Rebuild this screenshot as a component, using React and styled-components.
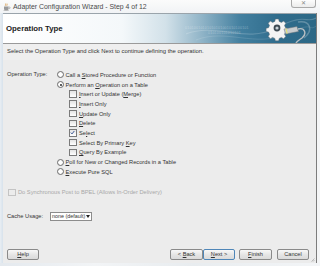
import React from "react";
import styled, { createGlobalStyle } from "styled-components";

const GlobalStyle = createGlobalStyle`
  html, body {
    margin: 0;
    padding: 0;
    background: #eef2f5;
  }
  body {
    font-family: "Liberation Sans", Arial, sans-serif;
    color: #2a2a2a;
  }
`;

const Window = styled.div`
  width: 320px;
  height: 266px;
  display: flex;
  flex-direction: column;
  overflow: hidden;
  background: #eef2f5;
`;

const TitleBar = styled.div`
  height: 13px;
  display: flex;
  align-items: center;
  padding-left: 2px;
  background: linear-gradient(#fbfbfb, #f1f3f5);
  position: relative;
`;

const TitleText = styled.span`
  font-size: 6.9px;
  color: #4a4a4a;
  margin-left: 2px;
  white-space: nowrap;
`;

const CloseButton = styled.div`
  position: absolute;
  right: 4px;
  top: -1px;
  width: 23px;
  height: 8px;
  border: 1px solid #a9a9a9;
  border-top: none;
  border-radius: 0 0 3px 3px;
  background: linear-gradient(#ffffff, #ececec);
  color: #8a8a8a;
  font-size: 6px;
  line-height: 8px;
  text-align: center;
`;

const Frame = styled.div`
  flex: 1;
  display: flex;
`;

const SideBorder = styled.div`
  width: ${(p) => p.$w}px;
  background: ${(p) => p.$bg};
`;

const Dialog = styled.div`
  width: 313px;
  display: flex;
  flex-direction: column;
  background: #ececec;
  border-right: 1px solid #7c7c7c;
  position: relative;
`;

const Header = styled.div`
  height: 29px;
  border-top: 1px solid #9aa4ab;
  border-bottom: 1px solid #9a9a9a;
  display: flex;
  align-items: center;
  padding-left: 3px;
  position: relative;
  overflow: hidden;
  background: linear-gradient(
    90deg,
    #ffffff 0%,
    #f4f8fa 38%,
    #d2e1e9 52%,
    #8db2c6 64%,
    #427f9f 76%,
    #2f6c8c 88%,
    #2c6886 100%
  );
`;

const HeaderTitle = styled.span`
  font-size: 7.8px;
  font-weight: bold;
  color: #1c1c1c;
`;

const Binary = styled.div`
  position: absolute;
  left: ${(p) => p.$x}px;
  top: ${(p) => p.$y}px;
  font-size: 3.6px;
  letter-spacing: 0.2px;
  color: rgba(255, 255, 255, 0.35);
  white-space: nowrap;
`;

const HeaderArt = styled.svg`
  position: absolute;
  right: 0;
  top: 0;
`;

const Description = styled.div`
  height: 16px;
  padding: 3px 0 0 4px;
  box-sizing: border-box;
  font-size: 5.9px;
  line-height: 8px;
  color: #333;
  background: #efefef;
  white-space: nowrap;
`;

const Body = styled.div`
  flex: 1;
  display: flex;
  flex-direction: column;
  padding: 10px 0 0 4px;
  font-size: 5.7px;
  color: #333;
`;

const OperationGrid = styled.div`
  display: grid;
  grid-template-columns: 50px 1fr;
`;

const Label = styled.div`
  height: 9.7px;
  line-height: 9.7px;
  white-space: nowrap;
`;

const Options = styled.div`
  display: flex;
  flex-direction: column;
`;

const Option = styled.div`
  height: 9.7px;
  display: flex;
  align-items: center;
  padding-left: ${(p) => (p.$sub ? 12 : 0)}px;
  white-space: nowrap;
  color: ${(p) => (p.$disabled ? "#a8a8a8" : "#333")};
`;

const OptionText = styled.span`
  white-space: pre;
`;

const Radio = styled.span`
  flex: none;
  width: 5px;
  height: 5px;
  border-radius: 50%;
  border: 0.8px solid #6e6e6e;
  background: radial-gradient(#ffffff 40%, #e2e2e2);
  margin-right: 1.5px;
  display: flex;
  align-items: center;
  justify-content: center;
  &::after {
    content: "";
    width: 2px;
    height: 2px;
    border-radius: 50%;
    background: ${(p) => (p.$on ? "#2a2a2a" : "transparent")};
  }
`;

const Check = styled.span`
  flex: none;
  width: 5.5px;
  height: 5.5px;
  border: 0.8px solid ${(p) => (p.$disabled ? "#c4c4c4" : "#7a7a7a")};
  background: ${(p) => (p.$disabled ? "#ececec" : "linear-gradient(#e4e4e4, #ffffff)")};
  margin-right: 2.5px;
  display: flex;
  align-items: center;
  justify-content: center;
`;

const Under = styled.span`
  text-decoration: underline;
  text-decoration-thickness: 0.5px;
  text-underline-offset: 1px;
`;

const SyncRow = styled(Option)`
  margin-top: 11px;
  padding-left: 1px;
`;

const CacheRow = styled.div`
  margin-top: 14px;
  height: 10px;
  display: flex;
  align-items: center;
`;

const CacheLabel = styled.span`
  width: 43px;
  white-space: nowrap;
`;

const Select = styled.div`
  width: 42px;
  height: 9px;
  border: 1px solid #8c8c8c;
  background: #ffffff;
  display: flex;
  align-items: center;
  justify-content: space-between;
  padding: 0 1.5px 0 1px;
  box-sizing: border-box;
  font-size: 5.4px;
  white-space: nowrap;
`;

const Arrow = styled.span`
  width: 0;
  height: 0;
  border-left: 2.2px solid transparent;
  border-right: 2.2px solid transparent;
  border-top: 3px solid #222;
`;

const ButtonBar = styled.div`
  margin-top: auto;
  margin-bottom: 3px;
  display: flex;
  align-items: center;
  padding-right: 5px;
`;

const Button = styled.div`
  width: ${(p) => p.$w || 33}px;
  height: 11px;
  box-sizing: border-box;
  border: 1px solid ${(p) => (p.$default ? "#4f86b8" : "#8a8a8a")};
  border-radius: 2px;
  background: linear-gradient(#f8f8f8, #e6e6e6 50%, #dadada);
  font-size: 5.6px;
  line-height: 9px;
  text-align: center;
  color: #333;
  margin-left: ${(p) => p.$gap || 0}px;
  white-space: pre;
`;

const Grip = styled.svg`
  position: absolute;
  right: 1px;
  bottom: 1px;
`;

const BottomStrip = styled.div`
  height: 3px;
  background: linear-gradient(90deg, #e4e9ee, #f2f4f6 30%, #e8ecef 60%, #f3f5f7);
`;

const JavaIcon = () => (
  <svg width="9" height="9" viewBox="0 0 9 9">
    <path d="M2 4.5h4.5v2.2a1.6 1.6 0 0 1-1.6 1.6H3.6A1.6 1.6 0 0 1 2 6.7z" fill="#9a9a9a" />
    <path d="M6.5 5h0.8a0.8 0.8 0 0 1 0 1.6h-0.8" fill="none" stroke="#8a8a8a" strokeWidth="0.6" />
    <path d="M3.5 3.8c-0.6-0.8 0.6-1.2 0-2.2M5 3.8c-0.6-0.8 0.6-1.2 0-2.2" fill="none" stroke="#d08a2c" strokeWidth="0.7" />
    <ellipse cx="4.2" cy="8.4" rx="3" ry="0.5" fill="#b7b7b7" />
  </svg>
);

const GearArt = () => (
  <HeaderArt width="130" height="29" viewBox="0 0 130 29">
    <path d="M0 20 C30 8 60 30 90 14 S120 10 130 4" fill="none" stroke="rgba(255,255,255,0.18)" strokeWidth="1.2" />
    <path d="M10 26 C40 14 70 34 100 20 S122 18 130 12" fill="none" stroke="rgba(255,255,255,0.12)" strokeWidth="1" />
    <path d="M112 8 C124 6 128 16 118 24" fill="none" stroke="rgba(255,255,255,0.25)" strokeWidth="1.5" />
    <g transform="translate(91 14)">
      <g fill="#f4f4f4" stroke="#5a6a74" strokeWidth="0.5">
        <path d="M-1.6 -9h3.2l0.6 2.4 2.2 1 2.2-1.3 2.2 2.2-1.3 2.2 1 2.2 2.4 0.6v3.2l-2.4 0.6-1 2.2 1.3 2.2-2.2 2.2-2.2-1.3-2.2 1-0.6 2.4h-3.2l-0.6-2.4-2.2-1-2.2 1.3-2.2-2.2 1.3-2.2-1-2.2-2.4-0.6v-3.2l2.4-0.6 1-2.2-1.3-2.2 2.2-2.2 2.2 1.3 2.2-1z" />
      </g>
      <circle r="3.4" fill="#3e4a52" />
      <circle r="1.6" fill="#c9d2d8" />
    </g>
    <path d="M98 15 L111 12.5 L112.5 17.5 L99.5 20 Z" fill="#c8ccce" stroke="#6b7378" strokeWidth="0.5" />
    <path d="M100 14.6 L101.2 19.6" stroke="#e8ea60" strokeWidth="0.9" />
    <path d="M112 15 C119 13 121 20 116 24 C113 26 111 27 110 29" fill="none" stroke="#b9bfc3" strokeWidth="1.4" />
  </HeaderArt>
);

const Text = ({ children }) => <OptionText>{children}</OptionText>;

export default function App() {
  return (
    <>
      <GlobalStyle />
      <Window>
        <TitleBar>
          <JavaIcon />
          <TitleText>Adapter Configuration Wizard - Step 4 of 12</TitleText>
          <CloseButton>✕</CloseButton>
        </TitleBar>
        <Frame>
          <SideBorder $w={3} $bg="linear-gradient(90deg, #e9eef3, #d7e2ec)" />
          <Dialog>
            <Header>
              <HeaderTitle>Operation Type</HeaderTitle>
              <Binary $x={182} $y={12}>01010010101010101001010100101</Binary>
              <Binary $x={205} $y={17}>010100101010101</Binary>
              <GearArt />
            </Header>
            <Description>
              Select the Operation Type and click Next to continue defining the operation.
            </Description>
            <Body>
              <OperationGrid>
                <Label>Operation Type:</Label>
                <Options>
                  <Option>
                    <Radio />
                    <Text>Call a <Under>S</Under>tored Procedure or Function</Text>
                  </Option>
                  <Option>
                    <Radio $on />
                    <Text>Perform an <Under>O</Under>peration on a Table</Text>
                  </Option>
                  <Option $sub>
                    <Check />
                    <Text><Under>I</Under>nsert or Update (<Under>M</Under>erge)</Text>
                  </Option>
                  <Option $sub>
                    <Check />
                    <Text><Under>I</Under>nsert Only</Text>
                  </Option>
                  <Option $sub>
                    <Check />
                    <Text><Under>U</Under>pdate Only</Text>
                  </Option>
                  <Option $sub>
                    <Check />
                    <Text><Under>D</Under>elete</Text>
                  </Option>
                  <Option $sub>
                    <Check>
                      <svg width="5" height="5" viewBox="0 0 5 5">
                        <path d="M0.8 2.6 L2 3.9 L4.3 1" fill="none" stroke="#2b4a8c" strokeWidth="0.9" />
                      </svg>
                    </Check>
                    <Text>Se<Under>l</Under>ect</Text>
                  </Option>
                  <Option $sub>
                    <Check />
                    <Text>Select By Primary <Under>K</Under>ey</Text>
                  </Option>
                  <Option $sub>
                    <Check />
                    <Text><Under>Q</Under>uery By Example</Text>
                  </Option>
                  <Option>
                    <Radio />
                    <Text><Under>P</Under>oll for New or Changed Records in a Table</Text>
                  </Option>
                  <Option>
                    <Radio />
                    <Text><Under>E</Under>xecute Pure SQL</Text>
                  </Option>
                </Options>
              </OperationGrid>
              <SyncRow $disabled>
                <Check $disabled />
                <Text>Do Synchronous Post to BPEL (Allows In-Order Delivery)</Text>
              </SyncRow>
              <CacheRow>
                <CacheLabel>Cache Usage:</CacheLabel>
                <Select>
                  <span>none (default)</span>
                  <Arrow />
                </Select>
              </CacheRow>
              <ButtonBar>
                <Button $w={32}>
                  <Under>H</Under>elp
                </Button>
                <Button $gap={131}>
                  &lt; <Under>B</Under>ack
                </Button>
                <Button $default $w={32}>
                  <Under>N</Under>ext &gt;
                </Button>
                <Button $gap={4}>
                  <Under>F</Under>inish
                </Button>
                <Button $gap={5} $w={32}>
                  Cancel
                </Button>
              </ButtonBar>
            </Body>
            <Grip width="5" height="5" viewBox="0 0 5 5">
              <path d="M4.5 1.5 L1.5 4.5 M4.5 3 L3 4.5" stroke="#9a9a9a" strokeWidth="0.6" />
            </Grip>
          </Dialog>
          <SideBorder $w={3} $bg="#f4f5f6" />
        </Frame>
        <BottomStrip />
      </Window>
    </>
  );
}
